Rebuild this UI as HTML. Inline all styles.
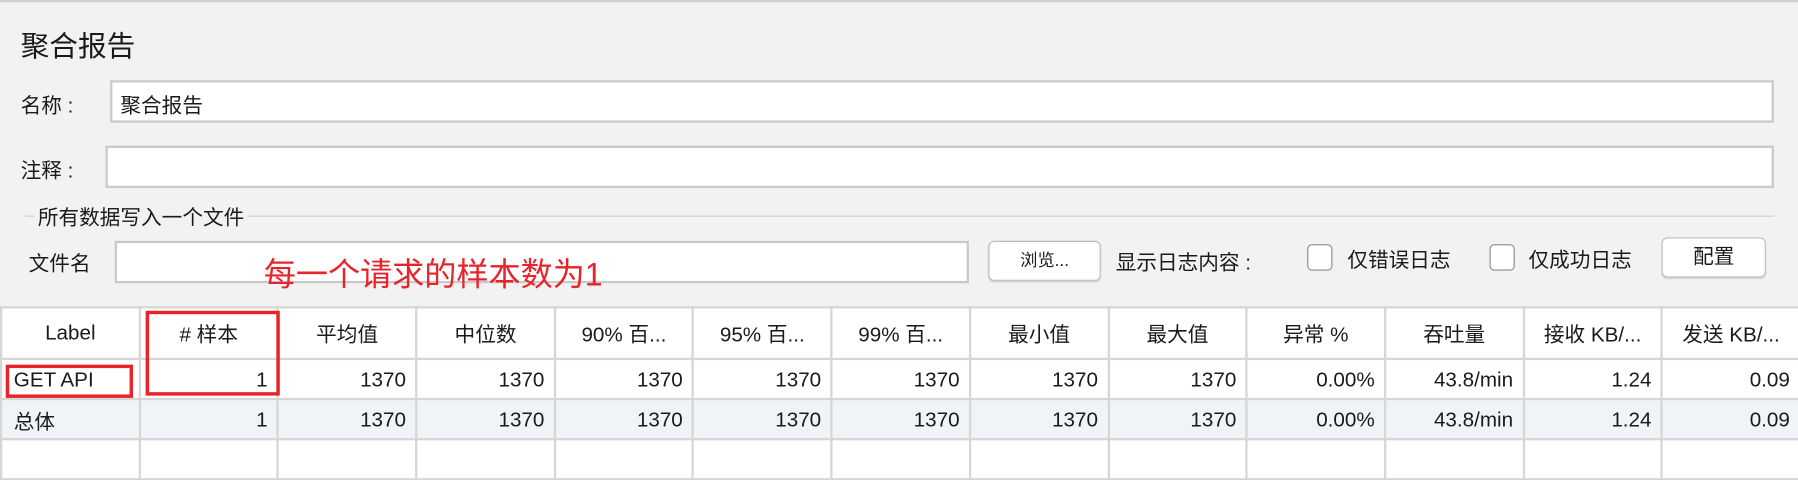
<!DOCTYPE html>
<html><head><meta charset="utf-8"><style>
html,body{margin:0;padding:0;width:1798px;height:470px;overflow:hidden;background:#f2f2f2}
#w{position:absolute;left:0;top:0;width:1568px;height:410px;transform:scale(1.14668);transform-origin:0 0;font-family:"Liberation Sans","Noto Sans CJK SC",sans-serif;color:#1a1a1a;background:#f2f2f2}
.a{position:absolute;white-space:nowrap}
.in{position:absolute;background:#fff;border:2px solid #c9c9c9;box-sizing:border-box}
.btn{position:absolute;background:#fff;border:1px solid #bdbdbd;border-radius:5px;box-sizing:border-box;text-align:center;font-size:16px;box-shadow:0 1px 1px rgba(0,0,0,.12)}
.cb{position:absolute;width:22px;height:23px;border:1.5px solid #8a8a8a;border-radius:4px;background:#fff;box-sizing:border-box}
table{position:absolute;left:0;top:267px;border-collapse:collapse;table-layout:fixed;width:1569px;background:#fff}
td{border:2px solid #d6d6d6;font-size:18px;padding:0 8px;text-align:right;overflow:hidden;white-space:nowrap}
tr.h td{text-align:center;height:43px;padding:0 4px}
tr.r td{height:31px;padding-top:2px}
tr.g td{background:#f0f3f8}
.red{position:absolute;border:3px solid #e8232a;box-sizing:border-box}
</style></head><body><div id="w">
<div class="a" style="left:0;top:0;width:1568px;height:2px;background:#d0d0d0"></div>
<div class="a" style="left:18px;top:21px;font-size:25px">聚合报告</div>
<div class="a" style="left:18px;top:78px;font-size:18px">名称 :</div>
<div class="in" style="left:96px;top:70px;width:1451px;height:37px"><span class="a" style="left:7px;top:6px;font-size:18px">聚合报告</span></div>
<div class="a" style="left:18px;top:135px;font-size:18px">注释 :</div>
<div class="in" style="left:92px;top:127px;width:1455px;height:37px"></div>
<div class="a" style="left:22px;top:188px;width:1525px;height:1px;background:#cfcfcf"></div>
<div class="a" style="left:30px;top:176px;font-size:18px;background:#f2f2f2;padding:0 3px">所有数据写入一个文件</div>
<div class="a" style="left:25px;top:216px;font-size:18px">文件名</div>
<div class="in" style="left:100px;top:210px;width:745px;height:37px"></div>
<div class="a" style="left:230px;top:218px;font-size:28px;color:#e8232a">每一个请求的样本数为1</div>
<div class="btn" style="left:862px;top:210px;width:98px;height:35px;line-height:33px;font-size:15px">浏览...</div>
<div class="a" style="left:973px;top:215px;font-size:18px">显示日志内容 :</div>
<div class="cb" style="left:1140px;top:213px"></div>
<div class="a" style="left:1175px;top:213px;font-size:18px">仅错误日志</div>
<div class="cb" style="left:1299px;top:213px"></div>
<div class="a" style="left:1333px;top:213px;font-size:18px">仅成功日志</div>
<div class="btn" style="left:1449px;top:207px;width:91px;height:35px;line-height:33px;font-size:18px">配置</div>
<table>
<colgroup><col span="13" style="width:120.7px"></colgroup>
<tr class="h"><td>Label</td><td># 样本</td><td>平均值</td><td>中位数</td><td>90% 百...</td><td>95% 百...</td><td>99% 百...</td><td>最小值</td><td>最大值</td><td>异常 %</td><td>吞吐量</td><td>接收 KB/...</td><td>发送 KB/...</td></tr>
<tr class="r"><td style="text-align:left;padding-left:10px">GET API</td><td>1</td><td>1370</td><td>1370</td><td>1370</td><td>1370</td><td>1370</td><td>1370</td><td>1370</td><td>0.00%</td><td>43.8/min</td><td>1.24</td><td>0.09</td></tr>
<tr class="r g"><td style="text-align:left;padding-left:10px">总体</td><td>1</td><td>1370</td><td>1370</td><td>1370</td><td>1370</td><td>1370</td><td>1370</td><td>1370</td><td>0.00%</td><td>43.8/min</td><td>1.24</td><td>0.09</td></tr>
<tr class="r"><td></td><td></td><td></td><td></td><td></td><td></td><td></td><td></td><td></td><td></td><td></td><td></td><td></td></tr>
</table>
<div class="red" style="left:127px;top:271px;width:117px;height:74px"></div>
<div class="red" style="left:5px;top:318px;width:111px;height:29px"></div>
</div></body></html>
